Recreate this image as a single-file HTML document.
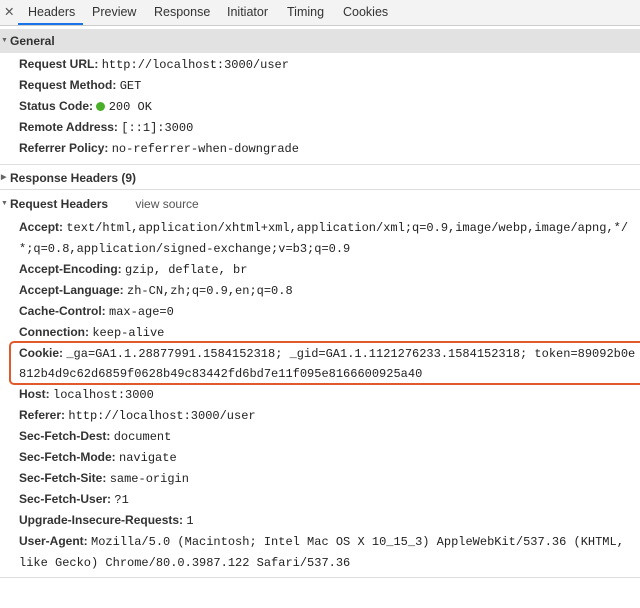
<!DOCTYPE html>
<html><head><meta charset="utf-8"><style>
body{margin:0;width:640px;height:608px;background:#fff;overflow:hidden;position:relative;font-family:"Liberation Sans",sans-serif;font-size:12px;color:#303030}
.a{position:absolute;white-space:nowrap}
.t{position:absolute;top:0;height:25px;line-height:24px;font-size:12.5px;color:#333}
.r{position:absolute;left:19px;white-space:nowrap;line-height:14px}
.r b{color:#333}
.m{font-family:"Liberation Mono",monospace;font-size:12px;color:#222}
.h{position:absolute;white-space:nowrap;font-weight:bold;color:#333;line-height:14px;left:10px}
.tri{position:absolute;left:-9px;top:3px;font-size:7px;line-height:8px;color:#666}
</style></head><body>
<div class="a" style="left:0;top:0;width:640px;height:25px;background:#f3f3f3;border-bottom:1px solid #ccc"></div>
<div class="t" style="left:4px;color:#555">✕</div>
<div class="t" style="left:28px">Headers</div>
<div class="a" style="left:18px;top:23px;width:65px;height:2px;background:#1a73e8"></div>
<div class="t" style="left:92px">Preview</div>
<div class="t" style="left:154px">Response</div>
<div class="t" style="left:227px">Initiator</div>
<div class="t" style="left:287px">Timing</div>
<div class="t" style="left:343px">Cookies</div>
<div class="a" style="left:0;top:29px;width:640px;height:24px;background:#e2e2e2"></div>
<div class="h" style="top:34px"><span class="tri">▼</span>General</div>
<div class="r" style="top:57px"><b>Request URL:</b> <span class="m">http://localhost:3000/user</span></div>
<div class="r" style="top:78px"><b>Request Method:</b> <span class="m">GET</span></div>
<div class="r" style="top:99px"><b>Status Code:</b> <span style="display:inline-block;width:9px;height:9px;border-radius:50%;background:#4caf2a;vertical-align:-1px"></span> <span class="m">200 OK</span></div>
<div class="r" style="top:120px"><b>Remote Address:</b> <span class="m">[::1]:3000</span></div>
<div class="r" style="top:141px"><b>Referrer Policy:</b> <span class="m">no-referrer-when-downgrade</span></div>
<div class="a" style="left:0;top:164px;width:640px;height:1px;background:#ddd"></div>
<div class="h" style="top:171px"><span class="tri">▶</span>Response Headers (9)</div>
<div class="a" style="left:0;top:189px;width:640px;height:1px;background:#ddd"></div>
<div class="h" style="top:197px"><span class="tri">▼</span>Request Headers <span style="font-weight:normal;color:#555;margin-left:24px">view source</span></div>
<div class="r" style="top:220px"><b>Accept:</b> <span class="m">text/html,application/xhtml+xml,application/xml;q=0.9,image/webp,image/apng,*/</span></div>
<div class="r" style="top:241px"><span class="m">*;q=0.8,application/signed-exchange;v=b3;q=0.9</span></div>
<div class="r" style="top:262px"><b>Accept-Encoding:</b> <span class="m">gzip, deflate, br</span></div>
<div class="r" style="top:283px"><b>Accept-Language:</b> <span class="m">zh-CN,zh;q=0.9,en;q=0.8</span></div>
<div class="r" style="top:304px"><b>Cache-Control:</b> <span class="m">max-age=0</span></div>
<div class="r" style="top:325px"><b>Connection:</b> <span class="m">keep-alive</span></div>
<div class="a" style="left:9px;top:341px;width:640px;height:40px;border:2px solid #e05a2b;border-radius:5px"></div>
<div class="r" style="top:346px"><b>Cookie:</b> <span class="m">_ga=GA1.1.28877991.1584152318; _gid=GA1.1.1121276233.1584152318; token=89092b0e</span></div>
<div class="r" style="top:366px"><span class="m">812b4d9c62d6859f0628b49c83442fd6bd7e11f095e8166600925a40</span></div>
<div class="r" style="top:387px"><b>Host:</b> <span class="m">localhost:3000</span></div>
<div class="r" style="top:408px"><b>Referer:</b> <span class="m">http://localhost:3000/user</span></div>
<div class="r" style="top:429px"><b>Sec-Fetch-Dest:</b> <span class="m">document</span></div>
<div class="r" style="top:450px"><b>Sec-Fetch-Mode:</b> <span class="m">navigate</span></div>
<div class="r" style="top:471px"><b>Sec-Fetch-Site:</b> <span class="m">same-origin</span></div>
<div class="r" style="top:492px"><b>Sec-Fetch-User:</b> <span class="m">?1</span></div>
<div class="r" style="top:513px"><b>Upgrade-Insecure-Requests:</b> <span class="m">1</span></div>
<div class="r" style="top:534px"><b>User-Agent:</b> <span class="m">Mozilla/5.0 (Macintosh; Intel Mac OS X 10_15_3) AppleWebKit/537.36 (KHTML,</span></div>
<div class="r" style="top:555px"><span class="m">like Gecko) Chrome/80.0.3987.122 Safari/537.36</span></div>
<div class="a" style="left:0;top:577px;width:640px;height:1px;background:#ddd"></div>
</body></html>
